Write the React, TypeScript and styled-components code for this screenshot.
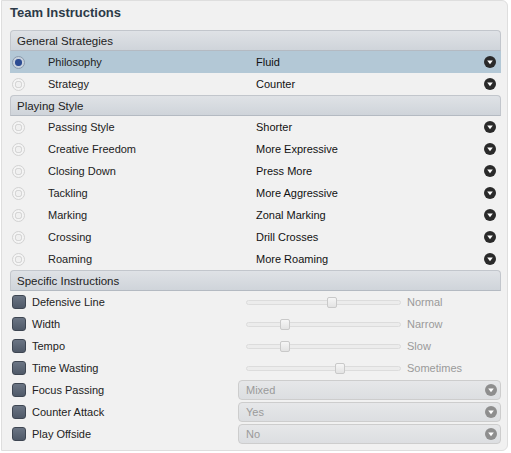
import styled, { createGlobalStyle } from "styled-components"

const GlobalStyle = createGlobalStyle`
  html, body {
    margin: 0;
    padding: 0;
    background: #ffffff;
  }
  body {
    font-family: "Liberation Sans", Arial, sans-serif;
    font-size: 11px;
    color: #222;
  }
`

const Panel = styled.div`
  width: 507px;
  height: 451px;
  box-sizing: border-box;
  margin: 0 0 0 1px;
  padding: 4px 6px 0 8px;
  background: #f1f1f1;
  border: 1px solid #dedede;
  border-radius: 0 6px 6px 0;
`

const Title = styled.h1`
  margin: 0;
  height: 25px;
  line-height: 16px;
  font-size: 13px;
  font-weight: bold;
  color: #2c3a48;
`

const SectionHeader = styled.div`
  height: 21px;
  box-sizing: border-box;
  padding-left: 6px;
  line-height: 20px;
  font-size: 11.5px;
  color: #222;
  background: linear-gradient(#dfe2e6, #cfd4da);
  border: 1px solid #c2c6cc;
  border-bottom-color: #b4bac2;
  border-radius: 4px 4px 0 0;
`

const Row = styled.div<{ $selected?: boolean }>`
  height: 22px;
  display: grid;
  grid-template-columns: 38px 208px 1fr 20px;
  align-items: center;
  background: ${(p) => (p.$selected ? "#b3c8d6" : "transparent")};
  font-size: 11px;
`

const Radio = styled.span<{ $on?: boolean }>`
  justify-self: start;
  margin-left: 2px;
  width: 13px;
  height: 13px;
  box-sizing: border-box;
  border-radius: 50%;
  border: 1px solid ${(p) => (p.$on ? "#8a9aac" : "#d2d2d2")};
  background: ${(p) =>
    p.$on
      ? "radial-gradient(circle, #2c4c92 0 3px, #5872a8 3.5px, #c7d1dc 4px)"
      : "radial-gradient(circle, #f0f0f0 0 2.5px, #d6d6d6 3px, #d6d6d6 3.5px, #f4f4f4 4px)"};
`

const Label = styled.span`
  color: #222;
`

const Value = styled.span`
  color: #111;
`

const ArrowIcon = ({ grey }: { grey?: boolean }) => (
  <svg width="12" height="12" viewBox="0 0 12 12">
    <circle cx="6" cy="6" r="6" fill={grey ? "#8e8e8e" : "#2a2a2a"} />
    <path d="M3.2 4.6 H8.8 L6 8.2 Z" fill="#fff" />
  </svg>
)

const ArrowCell = styled.span`
  display: flex;
  justify-content: center;
  margin-left: -3px;
`

const CheckRow = styled.div`
  height: 22px;
  display: grid;
  grid-template-columns: 22px 206px 1fr;
  align-items: center;
  font-size: 11px;
`

const Check = styled.span`
  margin-left: 2px;
  width: 14px;
  height: 14px;
  box-sizing: border-box;
  border-radius: 3px;
  border: 1px solid #3e4652;
  background: linear-gradient(#6b7584, #4f5968);
`

const SliderCell = styled.div`
  display: flex;
  align-items: center;
  gap: 6px;
  padding-left: 8px;
`

const Track = styled.div`
  position: relative;
  width: 155px;
  height: 5px;
  box-sizing: border-box;
  border: 1px solid #dcdcdc;
  border-radius: 3px;
  background: #ececec;
`

const Thumb = styled.span`
  position: absolute;
  top: -4px;
  width: 10px;
  height: 11px;
  box-sizing: border-box;
  margin-left: -5px;
  border: 1px solid #c9c9c9;
  border-radius: 2px;
  background: linear-gradient(#f6f6f6, #e3e3e3);
`

const SliderText = styled.span`
  color: #9a9a9a;
`

const Select = styled.div`
  height: 20px;
  box-sizing: border-box;
  display: flex;
  align-items: center;
  justify-content: space-between;
  padding: 0 3px 0 7px;
  border: 1px solid #cdcdcd;
  border-radius: 4px;
  background: linear-gradient(#e6e7e9, #dcdee1);
  color: #9a9a9a;
`

const general = [
  { label: "Philosophy", value: "Fluid", selected: true },
  { label: "Strategy", value: "Counter" },
]

const playing = [
  { label: "Passing Style", value: "Shorter" },
  { label: "Creative Freedom", value: "More Expressive" },
  { label: "Closing Down", value: "Press More" },
  { label: "Tackling", value: "More Aggressive" },
  { label: "Marking", value: "Zonal Marking" },
  { label: "Crossing", value: "Drill Crosses" },
  { label: "Roaming", value: "More Roaming" },
]

const sliders = [
  { label: "Defensive Line", value: "Normal", pos: 85 },
  { label: "Width", value: "Narrow", pos: 38 },
  { label: "Tempo", value: "Slow", pos: 38 },
  { label: "Time Wasting", value: "Sometimes", pos: 93 },
]

const selects = [
  { label: "Focus Passing", value: "Mixed" },
  { label: "Counter Attack", value: "Yes" },
  { label: "Play Offside", value: "No" },
]

const OptionRow = ({ label, value, selected }: { label: string; value: string; selected?: boolean }) => (
  <Row $selected={selected}>
    <Radio $on={selected} />
    <Label>{label}</Label>
    <Value>{value}</Value>
    <ArrowCell>
      <ArrowIcon />
    </ArrowCell>
  </Row>
)

export default function App() {
  return (
    <>
      <GlobalStyle />
      <Panel>
        <Title>Team Instructions</Title>
        <SectionHeader>General Strategies</SectionHeader>
        {general.map((r) => (
          <OptionRow key={r.label} {...r} />
        ))}
        <SectionHeader>Playing Style</SectionHeader>
        {playing.map((r) => (
          <OptionRow key={r.label} {...r} />
        ))}
        <SectionHeader>Specific Instructions</SectionHeader>
        {sliders.map((s) => (
          <CheckRow key={s.label}>
            <Check />
            <Label>{s.label}</Label>
            <SliderCell>
              <Track>
                <Thumb style={{ left: `${s.pos}px` }} />
              </Track>
              <SliderText>{s.value}</SliderText>
            </SliderCell>
          </CheckRow>
        ))}
        {selects.map((s) => (
          <CheckRow key={s.label}>
            <Check />
            <Label>{s.label}</Label>
            <Select>
              <span>{s.value}</span>
              <ArrowIcon grey />
            </Select>
          </CheckRow>
        ))}
      </Panel>
    </>
  )
}
